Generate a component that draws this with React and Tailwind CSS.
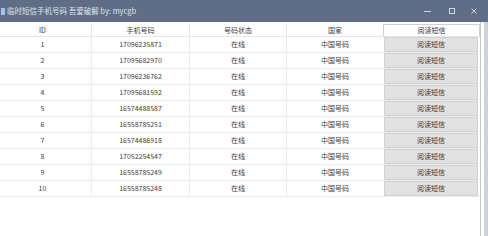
import React from "react";

const rows = [
  [1, "17096235871"],
  [2, "17095682970"],
  [3, "17096236762"],
  [4, "17095681592"],
  [5, "16574488587"],
  [6, "16558785251"],
  [7, "16574486918"],
  [8, "17052254547"],
  [9, "16558785249"],
  [10, "16558785248"],
];

const font = { fontFamily: '"Noto Sans CJK SC", "Noto Sans", sans-serif' };

export default function App() {
  return (
    <div className="w-[488px] h-[236px] bg-white overflow-hidden flex flex-col" style={font}>
      <div className="h-[22px] bg-[#5f6e86] flex items-center text-white shrink-0">
        <div className="w-[4px] h-[7px] bg-[#9fc3ee] ml-[1px] mr-[2px]" />
        <span className="text-[7.5px] text-[#dfe4eb] leading-none">临时短信手机号码 吾爱破解 by: mycgb</span>
        <div className="ml-auto flex items-center">
          <div className="w-[7px] h-[1px] bg-[#cfd6e0] mr-[18px]" />
          <div className="w-[6px] h-[6px] border border-[#cfd6e0] mr-[16px]" />
          <svg width="6" height="6" viewBox="0 0 6 6" className="mr-[11px]">
            <path d="M0.5 0.5L5.5 5.5M5.5 0.5L0.5 5.5" stroke="#cfd6e0" strokeWidth="1" />
          </svg>
        </div>
      </div>
      <div className="flex flex-1">
        <div className="flex-1 relative">
          <div className="-ml-[6px] mt-[2px] w-[488px] flex flex-col text-[7px] text-[#3c3c3c]">
            <div className="grid grid-cols-[98px_98px_97px_96px_97px] h-[13px] items-stretch border-b border-[#e6e6e6]">
              <div className="flex items-center justify-center border-r border-[#e6e6e6]">ID</div>
              <div className="flex items-center justify-center border-r border-[#e6e6e6]">手机号码</div>
              <div className="flex items-center justify-center border-r border-[#e6e6e6]">号码状态</div>
              <div className="flex items-center justify-center">国家</div>
              <div className="flex items-center justify-center border border-[#d0d0d0] border-b-0 bg-white">阅读短信</div>
            </div>
            {rows.map(([id, phone]) => (
              <div key={id} className="grid grid-cols-[98px_98px_97px_96px_97px] h-[16px] items-stretch border-b border-[#ececec]">
                <div className="flex items-center justify-center border-r border-[#ececec]">{id}</div>
                <div className="flex items-center justify-center border-r border-[#ececec]">{phone}</div>
                <div className="flex items-center justify-center border-r border-[#ececec]">在线</div>
                <div className="flex items-center justify-center">中国号码</div>
                <div className="flex items-stretch pl-[1px] pr-[2px]">
                  <div className="flex-1 flex items-center justify-center bg-[#e1e1e1] border border-[#d2d2d2]">阅读短信</div>
                </div>
              </div>
            ))}
          </div>
          <div className="absolute top-0 bottom-0 left-[480px] w-[1px] bg-[#c8c8c8]" />
        </div>
        <div className="w-[4px] bg-[#cfd3d8]" />
      </div>
    </div>
  );
}
